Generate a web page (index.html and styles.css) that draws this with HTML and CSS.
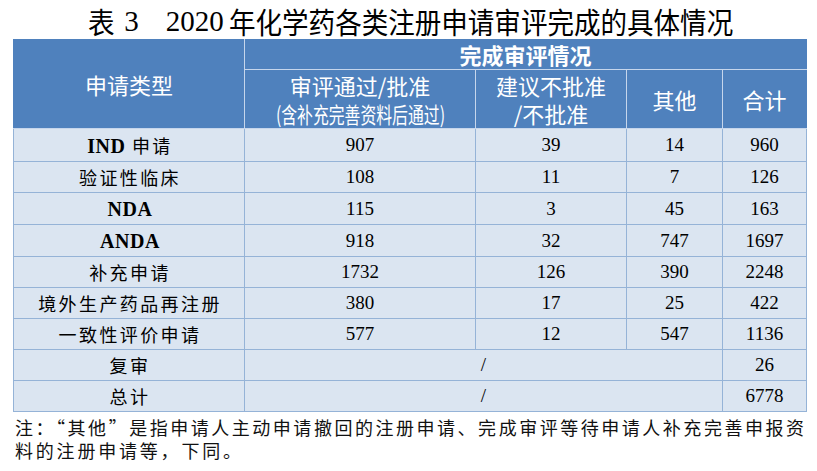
FILE: index.html
```html
<!DOCTYPE html>
<html lang="zh-CN">
<head>
<meta charset="utf-8">
<link rel="stylesheet" href="styles.css">
</head>
<body>
<div class="page">
  <div class="title"><span class="tk">表</span> 3<span class="tgap"></span>2020 <span class="tk tmain">年化学药各类注册申请审评完成的具体情况</span></div>
  <table class="data">
    <colgroup>
      <col class="c1"><col class="c2"><col class="c3"><col class="c4"><col class="c5">
    </colgroup>
    <thead>
      <tr class="h1">
        <th rowspan="2" class="hlabel">申请类型</th>
        <th colspan="4" class="hgroup">完成审评情况</th>
      </tr>
      <tr class="h2">
        <th><span class="hl">审评通过/批准</span><span class="hl"><span class="cond">(含补充完善资料后通过)</span></span></th>
        <th><span class="hl">建议不批准</span><span class="hl">/不批准</span></th>
        <th>其他</th>
        <th>合计</th>
      </tr>
    </thead>
    <tbody>
      <tr class="r1"><td class="lab"><b class="en">IND</b> 申请</td><td>907</td><td>39</td><td>14</td><td>960</td></tr>
      <tr class="r2"><td class="lab">验证性临床</td><td>108</td><td>11</td><td>7</td><td>126</td></tr>
      <tr class="r3"><td class="lab"><b class="en">NDA</b></td><td>115</td><td>3</td><td>45</td><td>163</td></tr>
      <tr class="r4"><td class="lab"><b class="en">ANDA</b></td><td>918</td><td>32</td><td>747</td><td>1697</td></tr>
      <tr class="r5"><td class="lab">补充申请</td><td>1732</td><td>126</td><td>390</td><td>2248</td></tr>
      <tr class="r6"><td class="lab">境外生产药品再注册</td><td>380</td><td>17</td><td>25</td><td>422</td></tr>
      <tr class="r7"><td class="lab">一致性评价申请</td><td>577</td><td>12</td><td>547</td><td>1136</td></tr>
      <tr class="r8"><td class="lab">复审</td><td colspan="3">/</td><td>26</td></tr>
      <tr class="r9"><td class="lab">总计</td><td colspan="3">/</td><td>6778</td></tr>
    </tbody>
  </table>
  <div class="note">
    <div class="line1">注：“其他”是指申请人主动申请撤回的注册申请、完成审评等待申请人补充完善申报资</div>
    <div class="line2">料的注册申请等，下同。</div>
  </div>
</div>
</body>
</html>
```

FILE: styles.css
```css
html, body {
  margin: 0;
  padding: 0;
  background: #ffffff;
}

.page {
  width: 817px;
  height: 471px;
  overflow: hidden;
  font-family: "Liberation Serif", "Noto Sans CJK SC", serif;
  color: #000;
}

.title {
  height: 39px;
  padding-left: 88px;
  padding-top: 3px;
  box-sizing: border-box;
  font-size: 29px;
  line-height: 36px;
  white-space: nowrap;
}

.tk {
  display: inline-block;
  font-family: "Noto Sans CJK SC", sans-serif;
  transform: scaleX(0.915);
  transform-origin: left center;
  line-height: 36px;
  vertical-align: top;
}

.tmain {
  margin-left: -2px;
}

.tgap {
  display: inline-block;
  width: 27px;
}

.data {
  margin-left: 13px;
  width: 793px;
  table-layout: fixed;
  border-collapse: collapse;
}

.c1 { width: 231px; }
.c2 { width: 231px; }
.c3 { width: 151px; }
.c4 { width: 96px; }
.c5 { width: 84px; }

th {
  background: #4f81bd;
  color: #ffffff;
  font-family: "Noto Sans CJK SC", "Liberation Sans", sans-serif;
  font-weight: 400;
  font-size: 22px;
  line-height: 28px;
  padding: 0;
  border: 1px solid #c6d6ec;
  text-align: center;
}

.hl {
  display: block;
  height: 28px;
  line-height: 28px;
}

thead tr.h1 th {
  border-top: none;
}

thead th.hlabel {
  border-left: 1px solid #4f81bd;
}

thead tr.h1 th.hgroup {
  border-right: 1px solid #4f81bd;
  font-weight: 700;
  height: 30px;
}

thead tr.h2 th {
  height: 58px;
}

thead tr.h2 th:last-child {
  border-right: 1px solid #4f81bd;
}

.cond {
  display: inline-block;
  transform: scaleX(0.72);
  transform-origin: center;
  white-space: nowrap;
  margin: 0 -40px;
}

td {
  background: #dbe5f1;
  border: 1px solid #95b3d7;
  padding: 0;
  text-align: center;
  font-size: 19px;
  line-height: 30px;
  height: 30px;
}

td.lab {
  font-family: "Noto Sans CJK SC", sans-serif;
  font-size: 18px;
  letter-spacing: 2.4px;
  padding-left: 2px;
}

td.lab .en {
  font-family: "Liberation Serif", serif;
  font-weight: 700;
  font-size: 20px;
  letter-spacing: 0.5px;
}

tbody tr.r1 td { height: 32px; }
tbody tr.r2 td { height: 29px; }
tbody tr.r4 td { height: 31px; }

.note {
  font-family: "Noto Sans CJK SC", sans-serif;
  font-size: 18px;
  line-height: 31px;
  color: #111;
  padding-left: 15px;
}

.line1 {
  width: 790px;
  text-align: justify;
  text-align-last: justify;
  letter-spacing: 1px;
  white-space: nowrap;
}

.line2 {
  letter-spacing: 2.8px;
  margin-top: -8px;
}
```
